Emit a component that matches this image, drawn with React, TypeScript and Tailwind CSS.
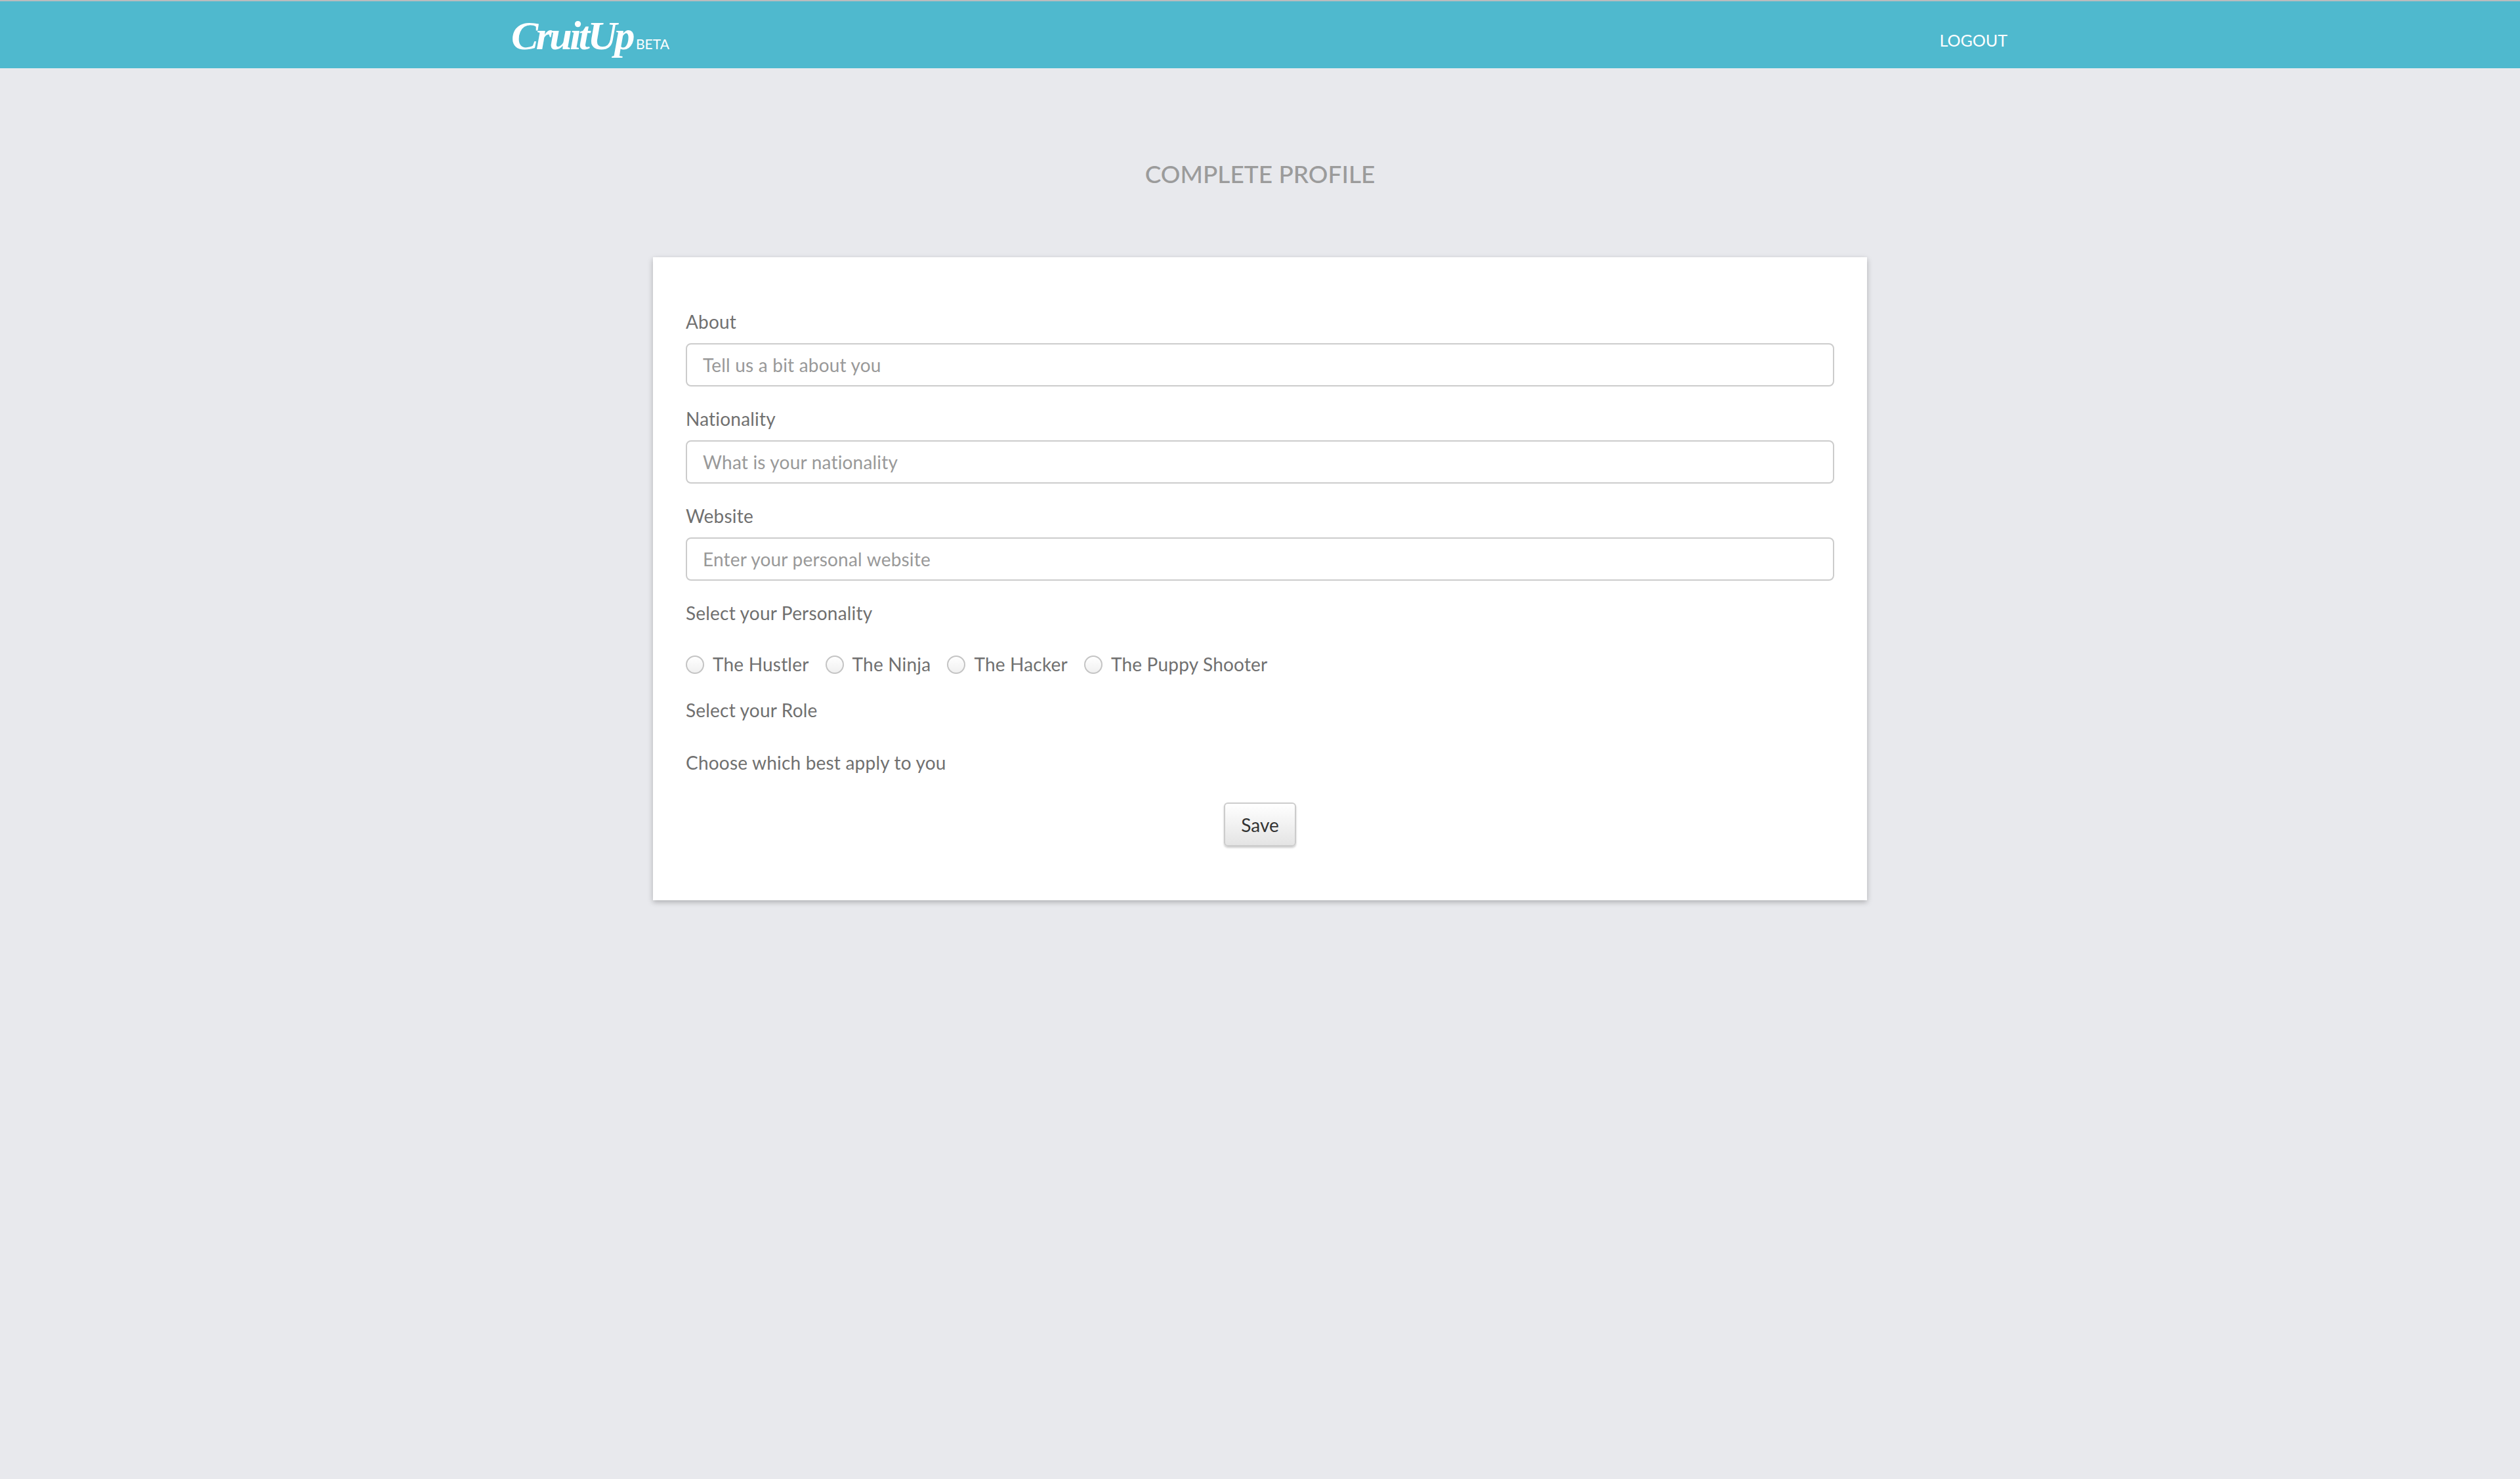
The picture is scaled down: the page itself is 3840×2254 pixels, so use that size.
const FIELDS = [
  { label: "About", placeholder: "Tell us a bit about you" },
  { label: "Nationality", placeholder: "What is your nationality" },
  { label: "Website", placeholder: "Enter your personal website" },
];

const PERSONALITIES = ["The Hustler", "The Ninja", "The Hacker", "The Puppy Shooter"];

const Header = () => {
  return (
    <header className="h-[104px] border-t-2 border-[#b9bcbe] bg-[#4fb9ce] text-white">
      <div className="mx-auto flex h-full w-[2290px] items-start justify-between">
        <a className="flex items-baseline pt-[20px] pl-[4px]">
          <span className="font-['Liberation_Serif',serif] text-[62px] leading-[64px] font-bold tracking-[-3.6px] italic">
            CruitUp
          </span>
          <span className="ml-[5px] text-[21px]">BETA</span>
        </a>
        <a className="pt-[41px] pr-[6px] text-[25px] leading-[36px]">LOGOUT</a>
      </div>
    </header>
  );
};

const Label = ({ text }: { text: string }) => {
  return <label className="block h-[34px] text-[28px] leading-[34px] tracking-[0.2px] text-[#707070]">{text}</label>;
};

const App = () => {
  return (
    <div className="min-h-[2254px] bg-[#e8e9ed] font-['Lato',sans-serif]">
      <Header />
      <h1 className="pt-[136px] pb-[102px] text-center text-[37px] leading-[50px] font-medium text-[#9b9b9b]">
        COMPLETE PROFILE
      </h1>
      <form className="mx-auto h-[980px] w-[1850px] bg-white px-[50px] pt-[81px] shadow-[0_3px_8px_rgba(0,0,0,0.25)]">
        {FIELDS.map((field) => (
          <div className="mb-[32px]" key={field.label}>
            <Label text={field.label} />
            <input
              className="mt-[16px] block h-[66px] w-full rounded-[8px] border-2 border-[#ccc] bg-white px-[24px] text-[28px] tracking-[0.2px] outline-none placeholder:text-[#999]"
              placeholder={field.placeholder}
            />
          </div>
        ))}
        <Label text="Select your Personality" />
        <div className="mt-[44px] flex h-[34px] items-center gap-[25px]">
          {PERSONALITIES.map((name) => (
            <label className="flex items-center gap-[13px] text-[28px] tracking-[0.2px] text-[#707070]" key={name}>
              <input
                type="radio"
                name="personality"
                className="mt-[2px] h-[28px] w-[28px] appearance-none rounded-full border-2 border-[#c4c4c4] bg-gradient-to-b from-white to-[#f0f0f0]"
              />
              {name}
            </label>
          ))}
        </div>
        <div className="mt-[36px]">
          <Label text="Select your Role" />
        </div>
        <div className="mt-[46px]">
          <Label text="Choose which best apply to you" />
        </div>
        <div className="mt-[44px] flex justify-center">
          <button
            type="button"
            className="h-[67px] w-[110px] rounded-[6px] border-2 border-[#ccc] bg-gradient-to-b from-white to-[#e4e4e4] text-[28px] text-[#333] shadow-[0_2px_3px_rgba(0,0,0,0.2)]"
          >
            Save
          </button>
        </div>
      </form>
    </div>
  );
};

export default App;
